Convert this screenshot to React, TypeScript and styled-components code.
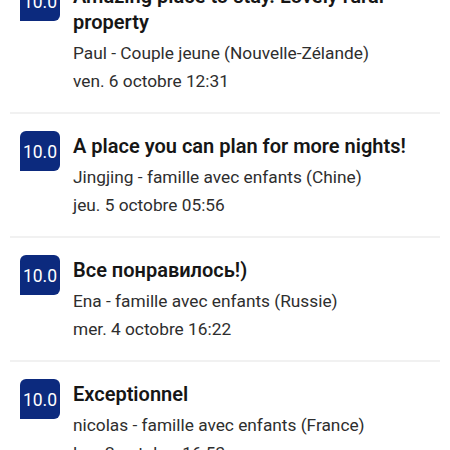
import React from 'react'
import styled, { createGlobalStyle } from 'styled-components'

interface IReview {
  score: string
  title: string
  author: string
  date: string
}

const reviews: IReview[] = [
  {
    score: '10.0',
    title: 'Amazing place to stay. Lovely rural property',
    author: 'Paul - Couple jeune (Nouvelle-Zélande)',
    date: 'ven. 6 octobre 12:31',
  },
  {
    score: '10.0',
    title: 'A place you can plan for more nights!',
    author: 'Jingjing - famille avec enfants (Chine)',
    date: 'jeu. 5 octobre 05:56',
  },
  {
    score: '10.0',
    title: 'Все понравилось!)',
    author: 'Ena - famille avec enfants (Russie)',
    date: 'mer. 4 octobre 16:22',
  },
  {
    score: '10.0',
    title: 'Exceptionnel',
    author: 'nicolas - famille avec enfants (France)',
    date: 'lun. 2 octobre 16:53',
  },
]

const GlobalStyle = createGlobalStyle`
  html, body {
    margin: 0;
    padding: 0;
    background: #fff;
    overflow: hidden;
  }
  body {
    font-family: Roboto, "Noto Sans", "Liberation Sans", sans-serif;
    color: #1a1a1a;
  }
`

const ReviewList = styled.div`
  display: flex;
  flex-direction: column;
  // first review is scrolled partly out of view
  margin-top: -36px;
  height: 486px;
  overflow: hidden;
`

const ReviewRow = styled.div`
  display: flex;
  align-items: flex-start;
  gap: 13px;
  margin: 0 10px;
  padding: 17px 10px 17px 10px;
  border-bottom: 2px solid #f1f1f1;
`

const ScoreBadge = styled.div`
  flex: 0 0 auto;
  width: 40px;
  height: 40px;
  display: flex;
  align-items: center;
  justify-content: center;
  padding-top: 2px;
  box-sizing: border-box;
  background: #0c2a7e;
  color: #fff;
  font-size: 17.5px;
  font-weight: 400;
  border-radius: 6px 6px 6px 0;
`

const ReviewBody = styled.div`
  display: flex;
  flex-direction: column;
  padding-top: 2px;
  min-width: 0;
`

const Title = styled.div`
  font-size: 20px;
  line-height: 26px;
  font-weight: 600;
  color: #161616;
  margin-bottom: 4px;
`

const Meta = styled.div`
  font-size: 17.3px;
  line-height: 28px;
  color: #2e2e2e;
`

export default function App() {
  return (
    <>
      <GlobalStyle />
      <ReviewList>
        {reviews.map((r, i) => (
          <ReviewRow key={i}>
            <ScoreBadge>{r.score}</ScoreBadge>
            <ReviewBody>
              <Title>{r.title}</Title>
              <Meta>{r.author}</Meta>
              <Meta>{r.date}</Meta>
            </ReviewBody>
          </ReviewRow>
        ))}
      </ReviewList>
    </>
  )
}
